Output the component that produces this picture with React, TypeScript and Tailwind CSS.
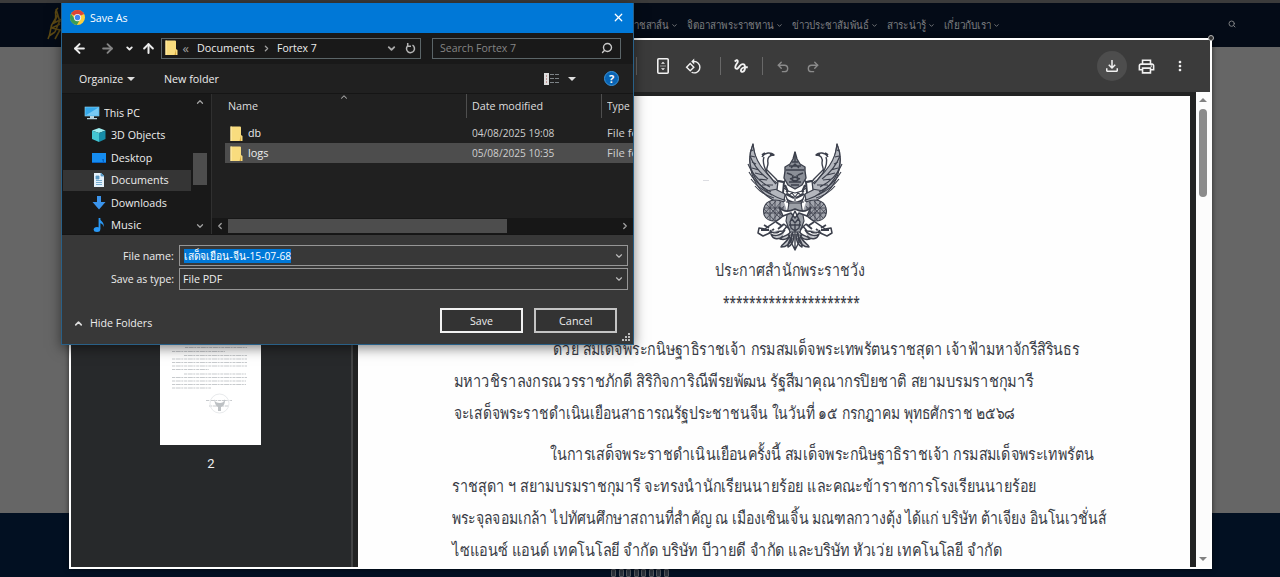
import { useLayoutEffect, useRef, type ReactNode } from "react";
import { ArrowLeft, ArrowRight, ArrowUp, ChevronDown, ChevronLeft, ChevronRight, ChevronUp, Redo2, Search, Undo2, X } from "lucide-react";
import { MdGesture, MdMoreVert, MdOutlineFileDownload, MdOutlinePrint, MdRotate90DegreesCcw } from "react-icons/md";

/* One line of text, condensed or widened to fill the width of its box. */
function Fit({ className, children }: { className: string; children: string }) {
  const box = useRef<HTMLSpanElement>(null);
  const text = useRef<HTMLSpanElement>(null);
  useLayoutEffect(() => {
    if (!box.current || !text.current) return;
    text.current.style.transform = `scaleX(${box.current.clientWidth / text.current.offsetWidth})`;
  }, [children]);
  return (
    <span ref={box} className={`block shrink-0 whitespace-nowrap ${className}`}>
      <span ref={text} className="inline-block origin-left">{children}</span>
    </span>
  );
}

function NavItem({ w, children }: { w: string; children: string }) {
  return (
    <div className="flex items-center">
      <Fit className={w}>{children}</Fit>
      <ChevronDown className="ml-0.5 size-[7px]" strokeWidth={3} />
    </div>
  );
}

function Page() {
  return (
    <div className="flex h-[577px] flex-col bg-[#666666]">
      <div className="h-[3px] bg-[#3b3b3b]" />
      <div className="flex h-11 items-center bg-[#040b17] text-[11.500px] text-[#7c7e80]">
        <svg className="ml-[46px] h-9 w-6" viewBox="0 0 24 36" fill="none" stroke="#5d4a14" strokeWidth="1.6">
          <path d="M12 1C6 6 13 8 8 14S6 24 2 32M12 7l-4 9 6-3-5 12M14 17l-8 4 8 2-5 9M10 2l4 13M3 29l6-4" />
        </svg>
        <div className="ml-[542px] flex items-center gap-[9px]">
          <NavItem w="w-[57px]">พระราชสาส์น</NavItem>
          <NavItem w="w-[87px]">จิตอาสาพระราชทาน</NavItem>
          <NavItem w="w-[77px]">ข่าวประชาสัมพันธ์</NavItem>
          <NavItem w="w-[39px]">สาระน่ารู้</NavItem>
          <NavItem w="w-[47px]">เกี่ยวกับเรา</NavItem>
        </div>
        <Search className="mr-[44px] mb-0.5 ml-auto size-2" strokeWidth={3} />
      </div>
      <div className="h-[466px]" />
      <div className="flex flex-1 justify-center bg-[#021022] pt-[56px]">
        <div className="flex gap-[2.500px]">
          {[0, 1, 2, 3, 4, 5, 6, 7].map((i) => (
            <span key={i} className="h-2 w-[5px] rounded-[1px] border border-[#53585e] bg-[#2b323b]" />
          ))}
        </div>
      </div>
    </div>
  );
}

function ToolButton({ className = "", children }: { className?: string; children: ReactNode }) {
  return <button className={`flex size-[30px] shrink-0 items-center justify-center rounded-full ${className}`}>{children}</button>;
}

function Divider({ className }: { className: string }) {
  return <span className={`h-[18px] w-px shrink-0 bg-[#686868] ${className}`} />;
}

function PdfToolbar() {
  return (
    <div className="flex h-[52px] shrink-0 items-center bg-[#3b3b3b] pr-[15px] pl-[565px] text-[#f1f1f1]">
      <Divider className="" />
      <ToolButton className="ml-[11px]">
        <svg className="h-4 w-3" viewBox="0 0 12 16" fill="none" stroke="currentColor" strokeWidth="1.6">
          <rect x="0.8" y="0.8" width="10.4" height="14.4" rx="1" />
          <path d="M4 5.700 6 3.700l2 2ZM4 10.300l2 2 2-2Z" fill="currentColor" stroke="none" />
          <path d="M3.500 8h1M5.500 8h1M7.500 8h1" strokeWidth="1" />
        </svg>
      </ToolButton>
      <ToolButton><MdRotate90DegreesCcw className="size-[17px]" /></ToolButton>
      <Divider className="ml-3" />
      <ToolButton className="ml-[5px]"><MdGesture className="size-[18px]" /></ToolButton>
      <Divider className="ml-1.5" />
      <ToolButton className="ml-[5px] pt-0.5 text-[#8b8b8b]"><Undo2 className="size-[14px]" strokeWidth={2.4} /></ToolButton>
      <ToolButton className="pt-0.5 text-[#8b8b8b]"><Redo2 className="size-[14px]" strokeWidth={2.4} /></ToolButton>
      <div className="ml-auto flex gap-1">
        <ToolButton className="bg-[#4d4d4d]"><MdOutlineFileDownload className="size-[18px]" /></ToolButton>
        <ToolButton><MdOutlinePrint className="size-[19px]" /></ToolButton>
        <ToolButton><MdMoreVert className="size-4" /></ToolButton>
      </div>
    </div>
  );
}

function Wing() {
  return (
    <g>
      <path d="M6 2C-1 18 2 48 32 61L38 59 37 55C21 50 10 30 6 2Z" fill="#b4b7be" />
      <path d="M6 2C7 16 14 30 39 48L37 58C12 50-4 27 6 2Z" fill="#b4b7be" />
      <path d="M3 14c4 10 10 17 18 23M1 22c4 10 12 18 22 23M2 30c5 9 12 15 22 20M4 37c6 8 13 12 21 16M8 44c5 6 12 10 19 12M9 22l-4-2M12 28l-7-2M16 33l-8-2M20 38l-9-1M26 43l-11 0M31 47l-12 2M6 8l-2 1M8 15l-4-1" />
      <path d="M15 15C18 10 24 10 27 13c-5 0-7 3-6 8 0 4-2 5-1 7l9 9 3 4M17 15c-2 5 1 12 3 16l9 11" fill="#fff" strokeWidth="1.4" />
      <path d="M15 13l3-2M27 13l-4-1" strokeWidth="2" />
      <path d="M37 60c-9-4-18-2-20 6s3 13 10 13 10-5 13-10" fill="#a2a5ad" />
      <path d="M19 62l14 14M22 60l13 14M17 67l10 11M34 60 20 76M29 59 17 72M37 64 25 79M17 66h20M17 71h20M23 59v19M28 58v21M33 59v19" strokeWidth="0.8" />
      <path d="M45 62C39 75 27 80 18 87l-6-1-1 5 5 3 9-4 11-1 5-6 5-2" fill="#fff" strokeWidth="1.5" />
      <path d="M17 83l5 3M22 91l5-4M31 87l6-5M14 88h8M29 80l6 4" strokeWidth="1.8" />
      <path d="M46 85c-3 10-10 8-13 12 4 1 8 0 10-4-3 9-8 8-9 12 4 0 9-2 11-9M46 90c-2 10-6 9-5 15 4-2 6-7 6-13M38 88c-5 7-12 6-14 4 2 6 8 6 12 2M32 90c-5 2-8 0-9-2" fill="#c5c7cc" strokeWidth="1.5" />
      <path d="M47 33c-5 0-8 3-10 7l-6-1-1 9 8 4 4 10 6 1" fill="#fff" strokeWidth="1.3" />
      <path d="M31 39l6 1-1 11M39 52l8 4M38 43l3 7" strokeWidth="2" />
    </g>
  );
}

function Garuda() {
  return (
    <svg className="h-[109px] w-24" viewBox="0 0 96 109" fill="none" stroke="#3c404c" strokeWidth="1.15" strokeLinejoin="round">
      <Wing />
      <g transform="translate(96 0) scale(-1 1)"><Wing /></g>
      <path d="M42 61h12l3 18-4 11H43l-4-11Z" fill="#9ca0a7" />
      <path d="M48 10l-2 7-3 5-5 3v4l-1 7 4 7 7 4 7-4 4-7-1-7v-4l-5-3-3-5Z" fill="#8b8f98" strokeWidth="1.4" />
      <path d="M48 10v10M45 20h6M42 24h12M39 28h18M40 31l5 2M56 31l-5 2M43 37l5-2 5 2M42 40h12M44 43h8M46 33l-1 5 3 1 3-1-1-5M44 26l4-4 4 4" strokeWidth="1.4" />
      <path d="M37 46l4 3 7 2 7-2 4-3M39 49l3 4 3-2 3 4 3-4 3 2 3-4M48 55v4M40 57c4 4 12 4 16 0M39 60h18" strokeWidth="1.2" />
      <path d="M32 65c4 5 10 5 16 2 6 3 12 3 16-2l-4 9-8-3-4 5-4-5-8 3Z" fill="#fff" strokeWidth="1.6" />
      <path d="M48 69l-5 11 1 6 4 3 4-3 1-6ZM44 76l4 5 4-5M42 83h12M48 82v24M45 91l-1 9 4 8 4-8-1-9M37 82l6 6M59 82l-6 6M41 92l3 6M55 92l-3 6" strokeWidth="1.4" />
    </svg>
  );
}

function Letter() {
  return (
    <div className="w-[832px] shrink-0 overflow-hidden bg-[#fefefe] text-[17px] leading-8 font-normal text-[#3a3d46]">
      <div className="flex h-[157px] pt-[46px] pl-[389px]">
        <span className="mt-[38px] -ml-11 h-px w-1.5 bg-[#dcdde2]" />
        <div className="ml-[38px]"><Garuda /></div>
      </div>
      <div className="flex h-[78px] flex-col pl-[357px]">
        <Fit className="mt-px w-[150px]">ประกาศสำนักพระราชวัง</Fit>
        <Fit className="ml-2 w-[137px] font-medium">*********************</Fit>
      </div>
      <div className="flex flex-col pt-[2px] pl-[94px]">
        <Fit className="ml-[101px] w-[526px]">ด้วย สมเด็จพระกนิษฐาธิราชเจ้า กรมสมเด็จพระเทพรัตนราชสุดา เจ้าฟ้ามหาจักรีสิรินธร</Fit>
        <Fit className="ml-[2px] w-[579px]">มหาวชิราลงกรณวรราชภักดี สิริกิจการิณีพีรยพัฒน รัฐสีมาคุณากรปิยชาติ สยามบรมราชกุมารี</Fit>
        <Fit className="ml-[2px] w-[561px]">จะเสด็จพระราชดำเนินเยือนสาธารณรัฐประชาชนจีน ในวันที่ ๑๕ กรกฎาคม พุทธศักราช ๒๕๖๘</Fit>
        <Fit className="mt-[9px] ml-[98px] w-[544px]">ในการเสด็จพระราชดำเนินเยือนครั้งนี้ สมเด็จพระกนิษฐาธิราชเจ้า กรมสมเด็จพระเทพรัตน</Fit>
        <Fit className="w-[585px]">ราชสุดา ฯ สยามบรมราชกุมารี จะทรงนำนักเรียนนายร้อย และคณะข้าราชการโรงเรียนนายร้อย</Fit>
        <Fit className="w-[654px]">พระจุลจอมเกล้า ไปทัศนศึกษาสถานที่สำคัญ ณ เมืองเซินเจิ้น มณฑลกวางตุ้ง ได้แก่ บริษัท ต้าเจียง อินโนเวชั่นส์</Fit>
        <Fit className="w-[550px]">ไซแอนซ์ แอนด์ เทคโนโลยี จำกัด บริษัท บีวายดี จำกัด และบริษัท หัวเว่ย เทคโนโลยี จำกัด</Fit>
      </div>
    </div>
  );
}

function Thumbnail() {
  return (
    <svg className="-ml-0.5 h-[141px] w-[101px]" viewBox="0 0 101 141">
      <rect width="101" height="141" fill="#fff" />
      <g stroke="#b9bdc0" strokeWidth="0.8" strokeDasharray="3 .7 5 .6 2 .8">
        <path d="M25 43.500H87M12 47.500H65M24 51.500H87M12 55H87M12 58.500H87M12 62H87M12 65.500H49M24 70H86M12 73.500H87M12 77H86M12 80.500H86M12 84H51M46 96.500H72M49 102H69" />
      </g>
      <circle cx="59.500" cy="99.500" r="9.500" fill="none" stroke="#e8eaec" />
      <path d="M54 95c1 5 2 7 4 8v4h3v-4c3-1 4-3 4-8-1 3-3 4-5 4-3 0-5-1-6-4Z" fill="#bdc1c4" />
    </svg>
  );
}

function PdfViewer() {
  return (
    <div className="absolute top-[38px] left-[69px] flex h-[531px] w-[1143px] flex-col border-2 border-white shadow-[0_0_5px_rgba(0,0,0,0.6)]">
      <PdfToolbar />
      <div className="flex h-[475px]">
        <div className="flex w-[280px] flex-col items-center bg-[#27292b] pt-[212px]">
          <Thumbnail />
          <span className="mt-[10px] font-['Roboto',sans-serif] text-[13px] leading-[18px] text-[#f1f1f1]">2</span>
        </div>
        <div className="w-0.5 bg-[#434445]" />
        <div className="flex bg-[#222323] pt-1 pr-1.5 pl-[5px]">
          <Letter />
        </div>
        <div className="flex w-[14px] flex-col items-center bg-[#fcfcfc] py-1.5">
          <svg className="h-1 w-2" viewBox="0 0 8 4"><path d="M0 4 4 0l4 4Z" fill="#818181" /></svg>
          <div className="mt-[7px] h-[88px] w-2 rounded-full bg-[#8b8b8b]" />
          <svg className="mt-auto h-1 w-2" viewBox="0 0 8 4"><path d="M0 0l4 4 4-4Z" fill="#818181" /></svg>
        </div>
      </div>
      <span className="absolute -top-[5px] -right-[4px] flex size-[6px] items-center justify-center rounded-full border border-[#b8b8b8] bg-[#333]" />
    </div>
  );
}

function Folder({ className = "" }: { className?: string }) {
  return (
    <svg className={`h-[15px] w-[13px] shrink-0 ${className}`} viewBox="0 0 13 15">
      <path d="M.5.500h9.500q1 0 1 1V9l1.500 1v5H.5Z" fill="#f8dc7e" />
      <path d="M11 9.500v5.500H9.500L11 9.500Z" fill="#d7a73f" />
      <path d="M.5.500h1.200V15H.5Z" fill="#ffeaa5" />
    </svg>
  );
}

function Caret() {
  return <svg className="h-1 w-2" viewBox="0 0 8 4"><path d="M0 0h8L4 4Z" fill="#dedede" /></svg>;
}

function ChromeLogo() {
  return (
    <svg className="size-[15px]" viewBox="0 0 24 24">
      <circle cx="12" cy="12" r="12" fill="#f9cf3f" />
      <path d="M12 12 1.600 6A12 12 0 0 1 22.400 6Z" fill="#dc4437" />
      <path d="M1.600 6A12 12 0 0 0 11 24l5.500-9.500-9-.5Z" fill="#3b9c57" />
      <path d="M12 6h10.400" stroke="#dc4437" strokeWidth="1.500" />
      <circle cx="12" cy="12" r="5.800" fill="#f4f4f4" />
      <circle cx="12" cy="12" r="4.300" fill="#4284ef" />
    </svg>
  );
}

const treeIcons: Record<string, ReactNode> = {
  "This PC": <><rect x="1" y="2" width="14" height="9" fill="#35a8ea" stroke="#91d7f5" strokeWidth=".6" /><path d="M1.500 10.500 14.500 2.500v8Z" fill="#78caf5" /><path d="M6 11h4v2H6ZM3 13h10v1.300H3Z" fill="#b7d3df" /></>,
  "3D Objects": <><path d="M8 1 14.500 3.500 8 6 1 3.500Z" fill="#a0eef1" /><path d="M1 3.500 8 6v9l-7-3Z" fill="#43c5d1" /><path d="M14.500 3.500 8 6v9l6.500-3Z" fill="#168da9" /></>,
  Desktop: <><rect x="1" y="3" width="14" height="10" fill="#158cef" /><path d="M1 12h14v1H1ZM11 9l1 3h1V9h1" fill="#0761c5" /></>,
  Documents: <><path d="M3 1h7l3 3v11H3Z" fill="#e4f1fa" /><path d="M10 1v3h3ZM5 4h3v3H5ZM5 8.500h6M5 10.500h6M5 12.500h6" fill="#5b9ac4" stroke="#5b9ac4" strokeWidth=".8" /></>,
  Downloads: <path d="M6 1h4v6h4.500L8 14.500 1.500 7H6Z" fill="#3b94ec" />,
  Music: <><path d="M8.500 1v11" stroke="#2998f5" strokeWidth="1.800" /><path d="M8 1c1 3 6 4 4.500 9-.5-3-2-4-4.500-4Z" fill="#2998f5" /><ellipse cx="6" cy="12.500" rx="3.300" ry="2.500" fill="#2998f5" /></>,
};

function TreeRow({ name, w, root, active }: { name: string; w: string; root?: boolean; active?: boolean }) {
  return (
    <div className="flex h-[22.500px] items-center">
      <div className={`flex h-[21px] w-[128px] items-center ${root ? "pl-[21px]" : "pl-7"} ${active ? "bg-[#353535]" : ""}`}>
        <svg className="size-4" viewBox="0 0 16 16">{treeIcons[name]}</svg>
        <Fit className={`ml-1 ${w}`}>{name}</Fit>
      </div>
    </div>
  );
}

function FileRow({ name, w, date, className = "" }: { name: string; w: string; date: string; className?: string }) {
  return (
    <div className={`ml-[13px] flex h-5 items-center overflow-hidden ${className}`}>
      <Folder className="ml-[5px]" />
      <div className="ml-[5px] w-[224px] shrink-0"><Fit className={w}>{name}</Fit></div>
      <div className="w-[135px] shrink-0 text-[#cfcfcf]"><Fit className="w-[82px]">{date}</Fit></div>
      <Fit className="w-[52px] text-[#cfcfcf]">File folder</Fit>
    </div>
  );
}

function SaveDialog() {
  return (
    <div className="absolute top-[3px] left-[61px] flex h-[342px] w-[573px] flex-col overflow-hidden border border-t-0 border-[#296087] bg-[#383838] font-['Open_Sans','Noto_Sans',sans-serif] text-[11.500px] leading-4 text-[#ededed] shadow-[0_3px_12px_rgba(0,0,0,0.5)]">
      <div className="flex h-[29.500px] shrink-0 items-center bg-[#0078d7] pr-[8px] pl-[8px] text-white">
        <ChromeLogo />
        <Fit className="ml-[5px] w-[38px]">Save As</Fit>
        <X className="ml-auto size-[13px]" strokeWidth={2.2} />
      </div>

      <div className="flex h-[31.500px] shrink-0 items-center bg-[#191919] pl-[10px]">
        <ArrowLeft className="size-[15px]" strokeWidth={3.2} />
        <ArrowRight className="ml-[13px] size-[15px] text-[#858585]" strokeWidth={3} />
        <ChevronDown className="ml-[10px] size-[9px]" strokeWidth={5} />
        <ArrowUp className="ml-[6.500px] size-[15px]" strokeWidth={3.2} />
        <div className="ml-[5px] flex h-[21px] w-[260px] items-center border border-[#5b6568] pl-[3px]">
          <Folder className="-mt-0.5" />
          <span className="ml-[5px] text-[13px] text-[#a0a0a0]">«</span>
          <Fit className="ml-[8px] w-[58px]">Documents</Fit>
          <ChevronRight className="ml-[7px] size-[9px] text-[#a0a0a0]" strokeWidth={3.5} />
          <Fit className="ml-[6px] w-[40px]">Fortex 7</Fit>
          <ChevronDown className="mr-[8px] ml-auto size-[11px] text-[#aaa]" strokeWidth={4} />
          <svg className="mr-[4px] size-[11px]" viewBox="0 0 11 11" fill="none" stroke="#b5b5b5" strokeWidth="1.500"><path d="M7.500 2.200A4 4 0 1 1 2.500 3M2.700 0v3.200H6" /></svg>
        </div>
        <div className="ml-[11px] flex h-[21px] w-[189px] items-center border border-[#5b6568] pr-[7px] pl-[7px] text-[#858585]">
          <Fit className="w-[76px]">Search Fortex 7</Fit>
          <Search className="ml-auto size-3 -scale-x-100 text-[#c8c8c8]" strokeWidth={2.800} />
        </div>
      </div>

      <div className="flex h-[29px] shrink-0 items-center bg-[#202020] pl-[17px]">
        <Fit className="mr-1 w-11">Organize</Fit>
        <Caret />
        <Fit className="ml-[29px] w-[55px]">New folder</Fit>
        <svg className="ml-[325px] h-3 w-4" viewBox="0 0 16 12" fill="none">
          <path d="M0 0h5v12H0Z" fill="#ddd" /><path d="M2 3h1M2 6h1M2 9h1" stroke="#a74c4c" />
          <path d="M6 1.500h4M11 1.500h4M6 5.500h4M11 5.500h4M6 9.500h4M11 9.500h4" stroke="#7d8387" />
        </svg>
        <div className="ml-2"><Caret /></div>
        <span className="ml-7 flex size-[15px] items-center justify-center rounded-full border border-[#3b93d9] bg-[#0864b4] text-[11px] font-bold text-white">?</span>
      </div>

      <div className="flex h-[142px] shrink-0 border-y border-[#151515]">
        <div className="flex w-[149px] shrink-0 bg-[#191919]">
          <div className="w-[131px] pt-[7.500px] pl-px">
            <TreeRow name="This PC" w="w-[36px]" root />
            <TreeRow name="3D Objects" w="w-[54px]" />
            <TreeRow name="Desktop" w="w-[41px]" />
            <TreeRow name="Documents" w="w-[58px]" active />
            <TreeRow name="Downloads" w="w-[56px]" />
            <TreeRow name="Music" w="w-[30px]" />
          </div>
          <div className="flex w-[14px] flex-col items-center py-[3px] text-[#a2a2a2]">
            <ChevronUp className="size-[10px]" strokeWidth={3} />
            <div className="mt-[46px] h-8 w-[14px] bg-[#4d4d4d]" />
            <ChevronDown className="mt-auto size-[10px]" strokeWidth={3} />
          </div>
        </div>
        <div className="flex min-w-0 flex-1 flex-col border-l border-[#303030] bg-[#202020]">
          <div className="flex h-[25px] pl-4 text-[#dedede]">
            <Fit className="mt-1 w-[30px]">Name</Fit>
            <ChevronUp className="-mt-0.5 ml-[81px] size-[10px] shrink-0 text-[#aaa]" strokeWidth={2.500} />
            <span className="ml-[117px] h-6 w-px shrink-0 bg-[#4e4e4e]" />
            <Fit className="mt-1 ml-[5px] w-[71px]">Date modified</Fit>
            <span className="ml-[58px] h-6 w-px shrink-0 bg-[#4e4e4e]" />
            <Fit className="mt-1 ml-[5px] w-[23px]">Type</Fit>
          </div>
          <FileRow name="db" w="w-[13px]" date="04/08/2025 19:08" className="mt-1" />
          <FileRow name="logs" w="w-[21px]" date="05/08/2025 10:35" className="bg-[#4d4d4d]" />
          <div className="mt-auto flex h-4 items-center bg-[#171717] pr-[3px] pl-[3px] text-[#a2a2a2]">
            <ChevronLeft className="size-[10px]" strokeWidth={3} />
            <div className="ml-[3px] h-[14px] w-[279px] bg-[#4d4d4d]" />
            <ChevronRight className="ml-auto size-[10px]" strokeWidth={3} />
          </div>
        </div>
      </div>

      <div className="flex flex-col gap-0.5 pt-[10px]">
        <div className="flex h-[21px] items-center pl-[61px]">
          <Fit className="w-[51px]">File name:</Fit>
          <div className="ml-[5px] flex h-[21px] w-[449px] items-center border border-[#969696] pr-[3px] pl-1">
            <div className="flex h-[14px] items-center bg-[#0078d7] text-white"><Fit className="w-[107px]">เสด็จเยือน-จีน-15-07-68</Fit></div>
            <ChevronDown className="ml-auto size-[10px] text-[#bbb]" strokeWidth={2.800} />
          </div>
        </div>
        <div className="flex h-[22px] items-center pl-[49px]">
          <Fit className="w-[63px]">Save as type:</Fit>
          <div className="ml-[5px] flex h-[22px] w-[449px] items-center border border-[#969696] bg-[#333] pr-[3px] pl-[3px]">
            <Fit className="w-[39px]">File PDF</Fit>
            <ChevronDown className="ml-auto size-[10px] text-[#bbb]" strokeWidth={2.800} />
          </div>
        </div>
      </div>

      <div className="mt-[18px] flex items-start pl-[11px]">
        <ChevronUp className="mt-[10px] size-[11px] text-[#ddd]" strokeWidth={3.500} />
        <Fit className="mt-[7px] ml-[6px] w-[62px]">Hide Folders</Fit>
        <button className="ml-[288px] flex h-[25px] w-[83px] items-center justify-center border-2 border-[#f2f2f2] bg-[#333]"><Fit className="w-[23px]">Save</Fit></button>
        <button className="ml-[11px] flex h-[25px] w-[83px] items-center justify-center border-2 border-[#c4c4c4] bg-[#333]"><Fit className="w-[34px]">Cancel</Fit></button>
        <svg className="mt-[25px] ml-[5px] size-2 shrink-0" viewBox="0 0 8 8" fill="#bcbcbc"><path d="M6 0h2v2H6ZM3 3h2v2H3ZM6 3h2v2H6ZM0 6h2v2H0ZM3 6h2v2H3ZM6 6h2v2H6Z" /></svg>
      </div>
    </div>
  );
}

export default function App() {
  return (
    <main className="relative h-[577px] w-[1280px] overflow-hidden font-['Noto_Sans',sans-serif]">
      <Page />
      <PdfViewer />
      <SaveDialog />
    </main>
  );
}
